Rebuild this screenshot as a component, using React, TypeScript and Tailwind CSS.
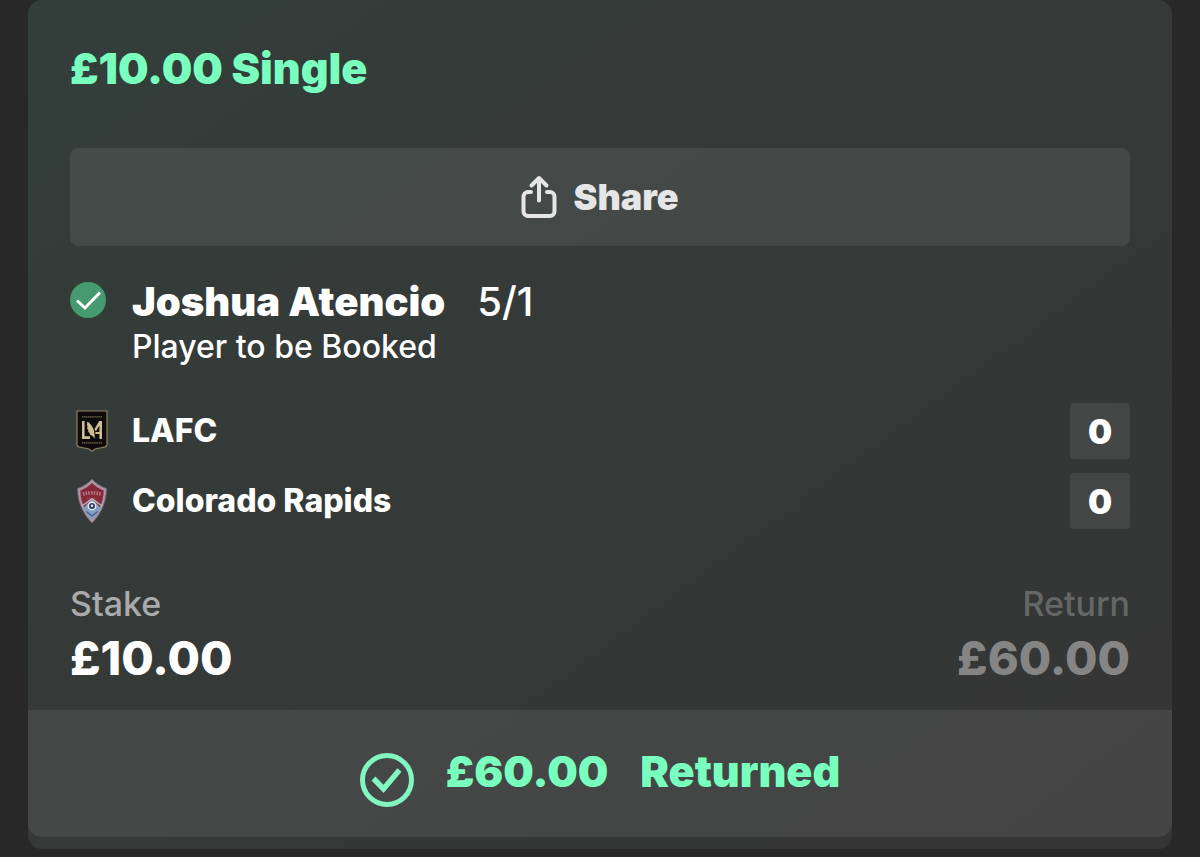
type Team = {
  name: string;
  score: number;
  Badge: () => React.ReactElement;
};

function LafcBadge() {
  return (
    <svg viewBox="0 0 32 42" className="h-[42px] w-8" aria-hidden="true">
      <path d="M1 1h30v33.500c0 1.500-1 2.300-2.500 2.700L19 39l-3 2.200L13 39l-9.500-1.800C2 36.800 1 36 1 34.500Z" fill="#0d0b0a" stroke="#8f8164" strokeWidth="1.200" />
      <path d="M6 6.800h20" stroke="#7d735a" strokeWidth="1.300" strokeDasharray="1.300 0.600" />
      <path d="M6 32.800h20" stroke="#7d735a" strokeWidth="1.300" strokeDasharray="1.300 0.600" />
      <path d="M6 11h2.600v15.300h5.400V29H6Z" fill="#cdbd91" />
      <path d="M11.500 11.500c3.500 2.500 5.500 5.500 6.500 9l1 8-3-3-2-.6-.3-2-1.500-1 .1-2-1.300-1.500.6-2-.8-2Z" fill="#cdbd91" />
      <path d="M18.500 19 23.200 11H26v18h-2.600v-5h-4v-2h4v-6.500l-3.600 6Z" fill="#cdbd91" />
    </svg>
  );
}

function RapidsBadge() {
  return (
    <svg viewBox="0 0 32 46" className="h-[46px] w-8" aria-hidden="true">
      <path d="M16 1c3.500 4.200 8.500 7.500 14.500 9.500C30.500 24 25 36 16 45 7 36 1.500 24 1.500 10.500 7.500 8.500 12.500 5.200 16 1Z" fill="#a995a3" stroke="#6d5f70" strokeWidth="0.800" />
      <path d="M16 5c3.200 3.300 7 5.800 11.700 7.500C27.500 23.500 23.500 33 16 41 8.500 33 4.500 23.500 4.300 12.500 9 10.800 12.800 8.300 16 5Z" fill="#86283a" />
      <path d="M7.500 30 16 20.500l8.500 9.500c-2 4.400-5 8.300-8.500 11.800C12.500 38.300 9.500 34.400 7.500 30Z" fill="#7fa3c3" />
      <path d="M6 28 16 20.500 26 28" fill="none" stroke="#c8b5c0" strokeWidth="1.400" />
      <path d="M7 16c5.500-1.500 12.500-1.500 18 0" fill="none" stroke="#bb7880" strokeWidth="3.600" strokeDasharray="1.500 1.200" />
      <path d="M11 20h10" stroke="#a4505c" strokeWidth="1.200" strokeDasharray="1.200 0.900" />
      <circle cx="16" cy="28" r="4.400" fill="#e6ebf2" />
      <circle cx="16" cy="28" r="3" fill="#2e3d63" />
      <circle cx="16" cy="27.800" r="1.200" fill="#e6ebf2" />
      <path d="M10.500 33.500 16 38l5.500-4.500" fill="none" stroke="#3f5f8b" strokeWidth="1.300" />
    </svg>
  );
}

function ShareIcon() {
  return (
    <svg viewBox="0 0 36 44" className="h-11 w-9" fill="none" stroke="#e6e6e6" strokeWidth="4" strokeLinecap="round" strokeLinejoin="round" aria-hidden="true">
      <path d="M10 17H7a4.500 4.500 0 0 0-4.500 4.500V36.500A4.500 4.500 0 0 0 7 41h22a4.500 4.500 0 0 0 4.500-4.500V21.500A4.500 4.500 0 0 0 29 17h-3" />
      <path d="M18 25.500V3M10.500 10.500 18 3l7.500 7.500" />
    </svg>
  );
}

const teams: Team[] = [
  { name: "LAFC", score: 0, Badge: LafcBadge },
  { name: "Colorado Rapids", score: 0, Badge: RapidsBadge },
];

export default function App() {
  return (
    <main className="min-h-screen bg-[#282828] px-7 pb-2 font-['Inter',sans-serif] text-white">
      <article className="rounded-[14px] bg-linear-to-br from-[#333e3a] via-[#353937] to-[#353535] pb-3">
        <div className="px-[42px] pt-11 pb-[26px]">
          <h1 className="text-[43px] leading-12 font-black text-[#79ffbe]">£10.00 Single</h1>

          <button type="button" className="mt-14 flex h-[98px] w-full items-center justify-center gap-4 rounded-lg bg-white/8 text-[36px] font-black text-[#e6e6e6]">
            <ShareIcon />
            Share
          </button>

          {/* Selection */}
          <section className="mt-8 flex gap-[26px]">
            <svg viewBox="0 0 36 36" className="mt-1 size-9 shrink-0" aria-hidden="true">
              <circle cx="18" cy="18" r="18" fill="#469a70" />
              <path d="M7 18.500l8 7.500L30 10.500" fill="none" stroke="#fff" strokeWidth="3" />
            </svg>
            <div>
              <div className="flex gap-8 text-[40px] leading-12">
                <h2 className="font-black">Joshua Atencio</h2>
                <span className="font-medium">5/1</span>
              </div>
              <p className="text-[32px] leading-[42px] font-medium">Player to be Booked</p>
            </div>
          </section>

          {/* Match score */}
          <ul className="mt-[35px] flex flex-col gap-3.5">
            {teams.map(({ name, score, Badge }) => (
              <li key={name} className="flex h-14 items-center">
                <span className="flex w-[62px] pl-1.5">
                  <Badge />
                </span>
                <span className="flex-1 text-[32px] font-extrabold">{name}</span>
                <span className="flex h-14 w-[60px] items-center justify-center rounded-sm bg-white/8 text-[34px] font-black">
                  {score}
                </span>
              </li>
            ))}
          </ul>

          <dl className="mt-[55px] flex justify-between">
            <div>
              <dt className="text-[34px] leading-10 font-medium text-[#a9abaa]">Stake</dt>
              <dd className="mt-2 text-[47px] leading-[52px] font-extrabold">£10.00</dd>
            </div>
            <div className="text-right">
              <dt className="text-[34px] leading-10 font-medium text-[#656766]">Return</dt>
              <dd className="mt-2 text-[47px] leading-[52px] font-extrabold text-[#858585]">£60.00</dd>
            </div>
          </dl>
        </div>

        <footer className="flex h-[127px] items-center justify-center gap-8 rounded-b-[14px] bg-white/8 pb-1 text-[43px] font-black text-[#79ffbe]">
          <svg viewBox="0 0 54 54" className="mt-4 size-[54px]" fill="none" stroke="#82f7c2" aria-hidden="true">
            <circle cx="27" cy="27" r="24.500" strokeWidth="5" />
            <path d="M13.500 25.500 23.500 36 39.500 17" strokeWidth="5.500" />
          </svg>
          <span>£60.00</span>
          <span>Returned</span>
        </footer>
      </article>
    </main>
  );
}
